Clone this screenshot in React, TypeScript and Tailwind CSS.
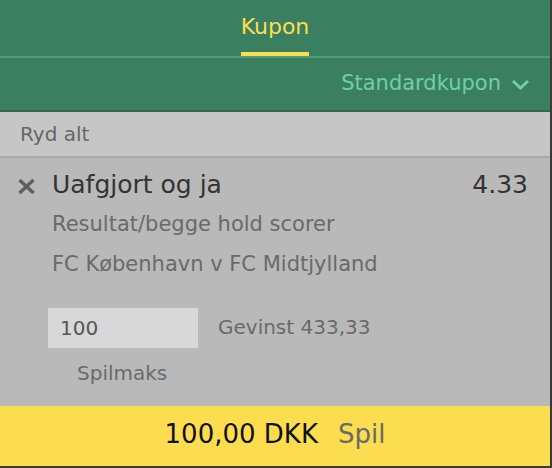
import React from 'react';

const font = { fontFamily: '"DejaVu Sans", "Liberation Sans", sans-serif' };

const App: React.FC = () => {
  return (
    <div className="w-[552px] h-[468px] bg-[#3a3a3a]" style={font}>
      <div className="w-[550px] h-[466px] flex flex-col bg-[#b9b9b9]">
        {/* Tabs */}
        <div className="h-[56px] bg-[#3b7f61] flex justify-center">
          <div className="flex flex-col items-center justify-end">
            <span className="text-[22px] leading-none text-[#fddd4e]">Kupon</span>
            <span className="mt-[14px] h-[4px] w-full bg-[#fddd4e]" />
          </div>
        </div>
        <div className="h-[2px] bg-[#4f9a77]" />

        {/* Coupon type */}
        <div className="h-[52px] bg-[#3b7f61] flex items-center justify-end pr-[20px]">
          <span className="text-[21px] text-[#6fd0a3]">Standardkupon</span>
          <svg className="ml-[10px]" width="19" height="11" viewBox="0 0 19 11" fill="none">
            <polyline points="2,2 9.5,9 17,2" stroke="#6fd0a3" strokeWidth="3" />
          </svg>
        </div>
        <div className="h-[2px] bg-[#2f6a50]" />

        {/* Clear all */}
        <div className="h-[44px] bg-[#c6c6c6] flex items-center pl-[20px]">
          <span className="text-[20px] text-[#666666]">Ryd alt</span>
        </div>
        <div className="h-[2px] bg-[#a9a9a9]" />

        {/* Selection */}
        <div className="flex-1 flex flex-col pt-[8px]">
          <div className="flex items-center pr-[22px]">
            <svg className="ml-[17px] mr-[16px] mt-[2px]" width="19" height="17" viewBox="0 0 19 17" fill="none">
              <line x1="2.5" y1="2" x2="16.5" y2="15" stroke="#5f5f5f" strokeWidth="3.5" />
              <line x1="16.5" y1="2" x2="2.5" y2="15" stroke="#5f5f5f" strokeWidth="3.5" />
            </svg>
            <span className="flex-1 text-[25px] leading-[38px] text-[#333333]">Uafgjort og ja</span>
            <span className="text-[25px] leading-[38px] text-[#333333]">4.33</span>
          </div>
          <div className="pl-[52px] text-[21px] leading-[40px] text-[#6a6a6a]">
            <div>Resultat/begge hold scorer</div>
            <div>FC København v FC Midtjylland</div>
          </div>
          <div className="mt-[24px] pl-[48px] flex items-center">
            <div className="w-[150px] h-[40px] bg-[#d8d8d8] flex items-center pl-[12px]">
              <span className="text-[20px] text-[#555555]">100</span>
            </div>
            <span className="ml-[20px] -mt-[2px] text-[20px] text-[#6a6a6a]">Gevinst 433,33</span>
          </div>
          <div className="pl-[77px] mt-[10px] text-[20px] leading-[30px] text-[#6a6a6a]">Spilmaks</div>
        </div>

        {/* Place bet */}
        <div className="h-[60px] bg-[#fcdd4f] flex items-center justify-center pb-[4px]">
          <span className="text-[26px] text-[#111111]">100,00 DKK</span>
          <span className="ml-[20px] text-[26px] text-[#6a6a6a]">Spil</span>
        </div>
      </div>
    </div>
  );
};

export default App;
